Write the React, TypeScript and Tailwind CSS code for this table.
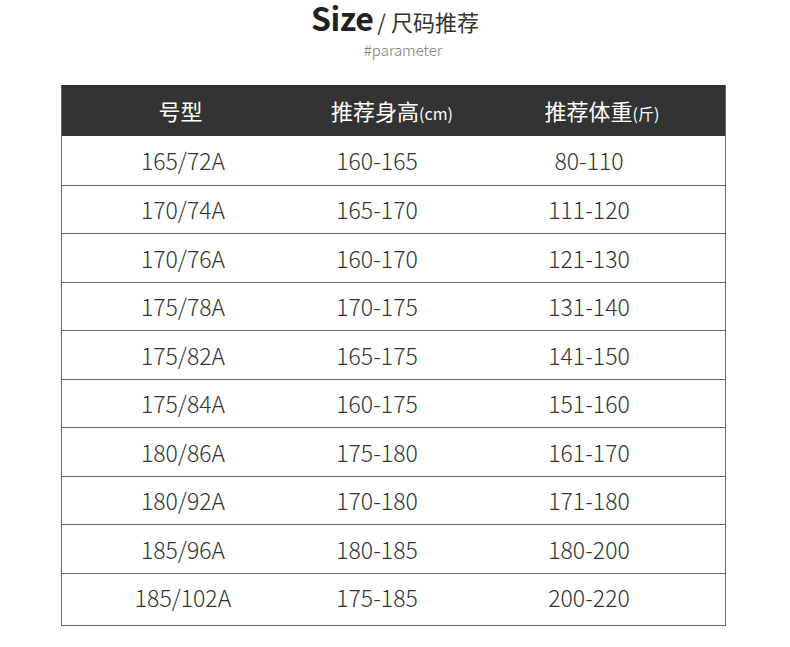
import React from 'react'

const ROWS: [string, string, string][] = [
  ['165/72A', '160-165', '80-110'],
  ['170/74A', '165-170', '111-120'],
  ['170/76A', '160-170', '121-130'],
  ['175/78A', '170-175', '131-140'],
  ['175/82A', '165-175', '141-150'],
  ['175/84A', '160-175', '151-160'],
  ['180/86A', '175-180', '161-170'],
  ['180/92A', '170-180', '171-180'],
  ['185/96A', '180-185', '180-200'],
  ['185/102A', '175-185', '200-220'],
]

function App() {
  return (
    <div
      className="w-[790px] h-[647px] bg-white text-[#333]"
      style={{ fontFamily: '"Noto Sans CJK SC", "Noto Sans", sans-serif' }}
    >
      <div className="flex flex-col items-center">
        <div className="flex items-baseline h-[34px]">
          <span className="text-[32px] font-bold leading-[34px] text-[#222] tracking-[-0.5px]">Size</span>
          <span className="text-[22px] leading-[34px] text-[#333] ml-[4px]">/ 尺码推荐</span>
        </div>
        <div className="text-[15px] leading-[20px] text-[#777] font-light mt-[6px] ml-[16px]">#parameter</div>
      </div>

      <div className="mx-[61px] mt-[25px] w-[665px] border-l border-r border-b border-[#666]">
        <div className="grid grid-cols-[237px_186px_1fr] h-[51px] bg-[#333] text-white items-center text-[22px]">
          <div className="text-center">号型</div>
          <div className="text-center">
            推荐身高<span className="text-[16px]">(cm)</span>
          </div>
          <div className="text-center pr-[6px]">
            推荐体重<span className="text-[16px]">(斤)</span>
          </div>
        </div>
        {ROWS.map((r, i) => (
          <div
            key={i}
            className={
              'grid grid-cols-[242px_146px_1fr] items-center text-[23px] font-light text-[#333] ' +
              (i > 0 ? 'border-t border-[#666] ' : '') +
              (i === ROWS.length - 1 ? 'h-[52px] pb-[3px]' : 'h-[48.5px]')
            }
          >
            <div className="text-center">{r[0]}</div>
            <div className="text-center">{r[1]}</div>
            <div className="text-center pl-[3px]">{r[2]}</div>
          </div>
        ))}
      </div>
    </div>
  )
}

export default App
